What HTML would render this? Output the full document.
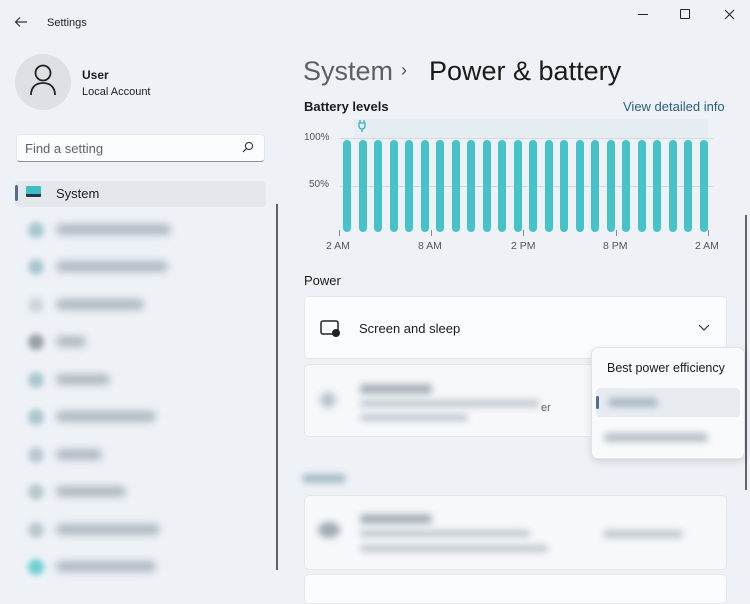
<!DOCTYPE html>
<html><head><meta charset="utf-8"><style>
*{margin:0;padding:0;box-sizing:border-box}
body{width:750px;height:593px;overflow:hidden;background:#eef2f7;font-family:"Liberation Sans",sans-serif;color:#1b1b1b;position:relative}
.a{position:absolute}
.bl{filter:blur(3.5px);color:#8a99a6}
.nav{position:absolute;left:24px;width:200px;height:20px}
.nav .ic{position:absolute;left:4px;top:2px;width:16px;height:16px;border-radius:50%;background:#a9c7cf;filter:blur(3px)}
.nav .tx{position:absolute;left:32px;top:4px;height:11px;background:#b0bac2;border-radius:5px;filter:blur(4px)}
.bar{position:absolute;top:140px;width:8px;height:92px;background:#45c3c8;border-radius:4px}
.card{position:absolute;background:#fbfcfd;border:1px solid #e4e8ec;border-radius:5px}
</style></head><body>
<svg class="a" style="left:14px;top:16px" width="14" height="12" viewBox="0 0 14 12"><path d="M13 6H1.5M6 1.5L1.5 6 6 10.5" stroke="#333" stroke-width="1.2" fill="none"/></svg>
<div class="a" style="left:47px;top:17px;font-size:11px;color:#222">Settings</div>
<div class="a" style="left:638px;top:14px;width:10px;height:1px;background:#222"></div>
<div class="a" style="left:680px;top:9px;width:10px;height:10px;border:1.3px solid #222;border-radius:1px"></div>
<svg class="a" style="left:724px;top:9px" width="11" height="11"><path d="M1 1L10 10M10 1L1 10" stroke="#222" stroke-width="1.1"/></svg>
<div class="a" style="left:15px;top:54px;width:56px;height:56px;border-radius:50%;background:#dde1e5"></div>
<svg class="a" style="left:29px;top:63px" width="28" height="34" viewBox="0 0 28 34"><circle cx="14" cy="10" r="7.5" stroke="#222" stroke-width="1.8" fill="none"/><path d="M2 32C2 24 7 20 14 20S26 24 26 32" stroke="#222" stroke-width="1.8" fill="none"/></svg>
<div class="a" style="left:82px;top:68px;font-size:12px;font-weight:bold">User</div>
<div class="a" style="left:82px;top:86px;font-size:11px;color:#222">Local Account</div>
<div class="a" style="left:16px;top:134px;width:249px;height:28px;background:#fbfcfd;border:1px solid #e3e6ea;border-bottom:1.5px solid #8a9096;border-radius:4px"></div>
<div class="a" style="left:25px;top:141px;font-size:13px;color:#5f6368">Find a setting</div>
<svg class="a" style="left:242px;top:141px" width="12" height="12"><circle cx="7" cy="5" r="3.6" stroke="#333" stroke-width="1.1" fill="none"/><path d="M4.5 7.5L1 11" stroke="#333" stroke-width="1.2"/></svg>
<div class="a" style="left:15px;top:181px;width:251px;height:26px;background:#e4e8ed;border-radius:4px"></div>
<div class="a" style="left:15px;top:185px;width:3px;height:16px;background:#4f6e91;border-radius:2px"></div>
<div class="a" style="left:26px;top:186px;width:15px;height:11px;background:#3fbfc5;border-radius:1px;border-bottom:3px solid #1f3a4f"></div>
<div class="a" style="left:56px;top:186px;font-size:13px;color:#1b1b1b">System</div>
<div class="nav" style="top:220px"><div class="ic"></div><div class="tx" style="width:115px"></div></div>
<div class="nav" style="top:257px"><div class="ic"></div><div class="tx" style="width:112px"></div></div>
<div class="nav" style="top:295px"><div class="ic" style="background:#d0d7dc"></div><div class="tx" style="width:88px"></div></div>
<div class="nav" style="top:332px"><div class="ic" style="background:#9aa0a8"></div><div class="tx" style="width:30px"></div></div>
<div class="nav" style="top:370px"><div class="ic"></div><div class="tx" style="width:54px"></div></div>
<div class="nav" style="top:407px"><div class="ic"></div><div class="tx" style="width:100px"></div></div>
<div class="nav" style="top:445px"><div class="ic" style="background:#b9c9d0"></div><div class="tx" style="width:46px"></div></div>
<div class="nav" style="top:482px"><div class="ic" style="background:#b9c9d0"></div><div class="tx" style="width:70px"></div></div>
<div class="nav" style="top:520px"><div class="ic" style="background:#b9c9d0"></div><div class="tx" style="width:104px"></div></div>
<div class="nav" style="top:557px"><div class="ic" style="background:#6fcfd2"></div><div class="tx" style="width:100px"></div></div>
<div class="a" style="left:276px;top:204px;width:1.5px;height:366px;background:#5f646a"></div>
<div class="a" style="left:745px;top:215px;width:1.5px;height:275px;background:#5f646a"></div>
<div class="a" style="left:303px;top:56px;font-size:27px;color:#5d6166">System</div>
<div class="a" style="left:401px;top:60px;font-size:18px;color:#555">›</div>
<div class="a" style="left:429px;top:56px;font-size:27px;color:#1b1b1b">Power &amp; battery</div>
<div class="a" style="left:304px;top:99px;font-size:13px;font-weight:bold;color:#1b1b1b">Battery levels</div>
<div class="a" style="left:623px;top:99px;font-size:13px;color:#2b5f7f">View detailed info</div>
<div class="a" style="left:354px;top:119px;width:354px;height:19px;background:#e6eef4"></div>
<svg class="a" style="left:358px;top:120px" width="8" height="12" viewBox="0 0 8 12"><path d="M2 0V3M6 0V3M1 3H7V6C7 8 5.5 9 4 9S1 8 1 6ZM4 9V12" stroke="#2fb5bc" stroke-width="1.3" fill="none"/></svg>
<div class="a" style="left:340px;top:138px;width:374px;height:1px;background:#d3d8dc"></div>
<div class="a" style="left:340px;top:186px;width:374px;height:1px;background:#d3d8dc"></div>
<div class="a" style="left:304px;top:132px;font-size:10px;color:#555">100%</div>
<div class="a" style="left:309px;top:179px;font-size:10px;color:#555">50%</div>
<div id="bars"></div>
<script>
var h='';for(var i=0;i<24;i++){h+='<div class="bar" style="left:'+(343+i*15.52).toFixed(1)+'px"></div>';}
document.getElementById('bars').innerHTML=h;
</script>
<div class="a" style="left:339px;top:230px;width:1px;height:6px;background:#888"></div>
<div class="a" style="left:431px;top:230px;width:1px;height:6px;background:#888"></div>
<div class="a" style="left:523px;top:230px;width:1px;height:6px;background:#888"></div>
<div class="a" style="left:616px;top:230px;width:1px;height:6px;background:#888"></div>
<div class="a" style="left:708px;top:230px;width:1px;height:6px;background:#888"></div>
<div class="a" style="left:326px;top:240px;font-size:10.5px;color:#555">2 AM</div>
<div class="a" style="left:418px;top:240px;font-size:10.5px;color:#555">8 AM</div>
<div class="a" style="left:511px;top:240px;font-size:10.5px;color:#555">2 PM</div>
<div class="a" style="left:603px;top:240px;font-size:10.5px;color:#555">8 PM</div>
<div class="a" style="left:695px;top:240px;font-size:10.5px;color:#555">2 AM</div>
<div class="a" style="left:304px;top:273px;font-size:13px;color:#1b1b1b">Power</div>
<div class="card" style="left:304px;top:296px;width:423px;height:63px"></div>
<svg class="a" style="left:320px;top:320px" width="22" height="18" viewBox="0 0 22 18"><rect x="1" y="1" width="17" height="13" rx="2" stroke="#222" stroke-width="1.5" fill="none"/><circle cx="16" cy="13" r="4" fill="#222"/></svg>
<div class="a" style="left:359px;top:321px;font-size:13px;color:#1b1b1b">Screen and sleep</div>
<svg class="a" style="left:698px;top:324px" width="12" height="8"><path d="M1 1L6 6 11 1" stroke="#333" stroke-width="1.2" fill="none"/></svg>
<div class="card" style="left:304px;top:364px;width:423px;height:73px;background:#f6f8fa"></div>
<div class="a bl" style="left:320px;top:392px;width:16px;height:16px;border-radius:50%;background:#b8c6cc"></div>
<div class="a bl" style="left:360px;top:384px;width:72px;height:10px;background:#a8b2ba;border-radius:4px"></div>
<div class="a bl" style="left:360px;top:400px;width:180px;height:7px;background:#c0c8ce;border-radius:4px"></div>
<div class="a bl" style="left:360px;top:414px;width:108px;height:7px;background:#c0c8ce;border-radius:4px"></div>
<div class="a" style="left:541px;top:402px;font-size:11px;color:#666">er</div>
<div class="a bl" style="left:302px;top:474px;width:44px;height:9px;background:#a8bcc8;border-radius:4px"></div>
<div class="card" style="left:304px;top:495px;width:423px;height:75px;background:#f6f8fa"></div>
<div class="a bl" style="left:318px;top:522px;width:22px;height:16px;border-radius:50%;background:#a0acb4"></div>
<div class="a bl" style="left:360px;top:514px;width:72px;height:10px;background:#a8b2ba;border-radius:4px"></div>
<div class="a bl" style="left:360px;top:530px;width:170px;height:7px;background:#c0c8ce;border-radius:4px"></div>
<div class="a bl" style="left:360px;top:545px;width:188px;height:7px;background:#c0c8ce;border-radius:4px"></div>
<div class="a bl" style="left:603px;top:530px;width:80px;height:8px;background:#c0c8ce;border-radius:4px"></div>
<div class="card" style="left:304px;top:574px;width:423px;height:30px"></div>
<div class="a" style="left:591px;top:347px;width:154px;height:112px;background:#f8fafb;border:1px solid #e1e5e9;border-radius:7px;box-shadow:0 3px 8px rgba(0,0,0,0.12)"></div>
<div class="a" style="left:607px;top:361px;font-size:12.5px;color:#1b1b1b">Best power efficiency</div>
<div class="a" style="left:596px;top:388px;width:144px;height:29px;background:#e8ecf0;border-radius:4px"></div>
<div class="a" style="left:596px;top:396px;width:3px;height:13px;background:#4f6e91;border-radius:2px"></div>
<div class="a bl" style="left:608px;top:398px;width:50px;height:9px;background:#a8b8c4;border-radius:4px"></div>
<div class="a bl" style="left:604px;top:433px;width:104px;height:9px;background:#b4c0c8;border-radius:4px"></div>
</body></html>
